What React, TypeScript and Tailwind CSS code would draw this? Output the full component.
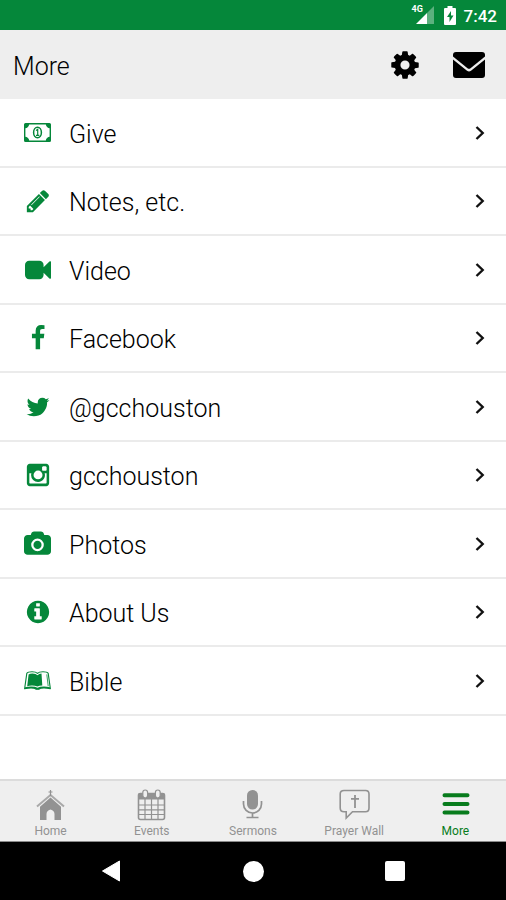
import React from "react";

const glyphs: Record<string, { width: number; path: string }> = {
  pencil: {
    width: 1792,
    path: "M491 1536l91-91-235-235-91 91v107h128v128h107zm523-928q0-22-22-22-10 0-17 7l-542 542q-7 7-7 17 0 22 22 22 10 0 17-7l542-542q7-7 7-17zm-54-192l416 416-832 832h-416v-416zm683 96q0 53-37 90l-166 166-416-416 166-165q36-38 90-38 53 0 91 38l235 234q37 39 37 91z",
  },
  video: {
    width: 1792,
    path: "M1792 352v1088q0 42-39 59-13 5-25 5-27 0-45-19l-403-403v166q0 119-84.5 203.5t-203.5 84.5h-704q-119 0-203.5-84.5t-84.5-203.5v-704q0-119 84.5-203.5t203.5-84.5h704q119 0 203.5 84.5t84.5 203.5v165l403-402q18-19 45-19 12 0 25 5 39 17 39 59z",
  },
  facebook: {
    width: 1792,
    path: "M1343 12v264h-157q-86 0-116 36t-30 108v189h293l-39 296h-254v759h-306v-759h-255v-296h255v-218q0-186 104-288.5t277-102.5q147 0 228 12z",
  },
  twitter: {
    width: 1792,
    path: "M1684 408q-67 98-162 167 1 14 1 42 0 130-38 259.5t-115.5 248.5-184.5 210.5-258 146-323 54.5q-271 0-496-145 35 4 78 4 225 0 401-138-105-2-188-64.5t-114-159.5q33 5 61 5 43 0 85-11-112-23-185.5-111.5t-73.5-205.5v-4q68 38 146 41-66-44-105-115t-39-154q0-88 44-163 121 149 294.5 238.5t371.5 99.5q-8-38-8-74 0-134 94.5-228.5t228.5-94.5q140 0 236 102 109-21 205-78-37 115-142 178 93-10 186-50z",
  },
  instagram: {
    width: 1792,
    path: "M1490 1426v-648h-135q20 63 20 131 0 126-64 232.5t-174 168.5-240 62q-197 0-337-135.5t-140-327.5q0-68 20-131h-141v648q0 26 17.5 43.5t43.5 17.5h1069q25 0 43-17.5t18-43.5zm-284-533q0-124-90.5-211.5t-218.5-87.5q-127 0-217.5 87.5t-90.5 211.5 90.5 211.5 217.5 87.5q128 0 218.5-87.5t90.5-211.5zm284-360v-165q0-28-20-48.5t-49-20.5h-174q-29 0-49 20.5t-20 48.5v165q0 29 20 49t49 20h174q29 0 49-20t20-49zm174-208v1142q0 81-58 139t-139 58h-1142q-81 0-139-58t-58-139v-1142q0-81 58-139t139-58h1142q81 0 139 58t58 139z",
  },
  camera: {
    width: 1920,
    path: "M960 672q119 0 203.5 84.5t84.5 203.5-84.5 203.5-203.5 84.5-203.5-84.5-84.5-203.5 84.5-203.5 203.5-84.5zm704-416q106 0 181 75t75 181v896q0 106-75 181t-181 75h-1408q-106 0-181-75t-75-181v-896q0-106 75-181t181-75h224l51-136q19-49 69.5-84.5t103.5-35.5h512q53 0 103.5 35.5t69.5 84.5l51 136h224zm-704 1152q185 0 316.5-131.5t131.5-316.5-131.5-316.5-316.5-131.5-316.5 131.5-131.5 316.5 131.5 316.5 316.5 131.5z",
  },
  info: {
    width: 1792,
    path: "M1152 1376v-160q0-14-9-23t-23-9h-96v-512q0-14-9-23t-23-9h-320q-14 0-23 9t-9 23v160q0 14 9 23t23 9h96v320h-96q-14 0-23 9t-9 23v160q0 14 9 23t23 9h448q14 0 23-9t9-23zm-128-896v-160q0-14-9-23t-23-9h-192q-14 0-23 9t-9 23v160q0 14 9 23t23 9h192q14 0 23-9t9-23zm640 416q0 209-103 385.5t-279.5 279.5-385.5 103-385.5-103-279.5-279.5-103-385.5 103-385.5 279.5-279.5 385.5-103 385.5 103 279.5 279.5 103 385.5z",
  },
  cog: {
    width: 1792,
    path: "M1152 896q0-106-75-181t-181-75-181 75-75 181 75 181 181 75 181-75 75-181zm512-109v222q0 12-8 23t-20 13l-185 28q-19 54-39 91 35 50 107 138 10 12 10 25t-9 23q-27 37-99 108t-94 71q-12 0-26-9l-138-108q-44 23-91 38-16 136-29 186-7 28-36 28h-222q-14 0-24.5-8.5t-11.5-21.5l-28-184q-49-16-90-37l-141 107q-10 9-25 9-14 0-25-11-126-114-165-168-7-10-7-23 0-12 8-23 15-21 51-66.5t54-70.5q-27-50-41-99l-183-27q-13-2-21-12.5t-8-23.5v-222q0-12 8-23t19-13l186-28q14-46 39-92-40-57-107-138-10-12-10-24 0-10 9-23 26-36 98.5-107.5t94.5-71.5q13 0 26 10l138 107q44-23 91-38 16-136 29-186 7-28 36-28h222q14 0 24.5 8.5t11.5 21.5l28 184q49 16 90 37l142-107q9-9 24-9 13 0 25 10 129 119 165 170 7 8 7 22 0 12-8 23-15 21-51 66.5t-54 70.5q26 50 41 98l183 28q13 2 21 12.5t8 23.5z",
  },
};

function GlyphIcon({ name, className }: { name: string; className: string }) {
  const glyph = glyphs[name];
  return (
    <svg className={className} viewBox={`0 0 ${glyph.width} 1792`} fill="currentColor" aria-hidden="true">
      <path d={glyph.path} />
    </svg>
  );
}

function MoneyIcon() {
  return (
    <svg className="h-[19px] w-[27px]" viewBox="0 0 27 19" fill="none" stroke="currentColor" aria-hidden="true">
      <rect x="0.700" y="0.700" width="25.600" height="17.600" rx="0.800" strokeWidth="1.400" />
      <path
        d="M1 1h4.200a4.200 4.200 0 0 1-4.200 4.200zM26 1h-4.200a4.200 4.200 0 0 0 4.200 4.200zM1 18h4.200a4.200 4.200 0 0 0-4.200-4.200zM26 18h-4.200a4.200 4.200 0 0 1 4.200-4.200z"
        fill="currentColor"
        stroke="none"
      />
      <ellipse cx="13.500" cy="9.500" rx="3.900" ry="5.200" strokeWidth="1.500" />
      <path d="M12 7.600 13.700 6.400v6M12 12.400h3.300" strokeWidth="1.200" />
    </svg>
  );
}

function BookIcon() {
  return (
    <svg className="h-[19px] w-[27px]" viewBox="0 0 27 19" aria-hidden="true">
      <path
        d="M2.800 2.300Q3.800.8 8 .8q4 0 5.500 1.600Q15 .8 19 .8q4.200 0 5.200 1.500L26.400 17.800q-3-.8-6.400-.8-4 0-5 1.200h-3Q11 17 7 17q-3.400 0-6.400.8z"
        fill="none"
        stroke="currentColor"
        strokeWidth="1.100"
        strokeLinejoin="round"
      />
      <path d="M4.600 3.600Q6 2.600 8.500 2.600q3.500 0 5 1.600 1.500-1.400 4-1.600l.8 11.800q-3.300 0-4.800 1.200Q11 14.400 8 14.400q-3 0-4.800.8z" fill="currentColor" />
      <path d="M22.800 3.400l1.400 11.800" fill="none" stroke="currentColor" strokeWidth="0.800" />
      <path d="M1 16.200q3-.8 6-.8 4.500 0 6.500 1.400 2-1.400 6.500-1.400 3 0 6 .8v1.600q-3-.8-6-.8-4 0-5 1.200h-3Q11 17 7 17q-3 0-6 .8z" fill="currentColor" />
    </svg>
  );
}

const menuItems = [
  { label: "Give", icon: "money" },
  { label: "Notes, etc.", icon: "pencil" },
  { label: "Video", icon: "video" },
  { label: "Facebook", icon: "facebook" },
  { label: "@gcchouston", icon: "twitter" },
  { label: "gcchouston", icon: "instagram" },
  { label: "Photos", icon: "camera" },
  { label: "About Us", icon: "info" },
  { label: "Bible", icon: "book" },
];

function MenuIcon({ name }: { name: string }) {
  if (name === "money") return <MoneyIcon />;
  if (name === "book") return <BookIcon />;
  return <GlyphIcon name={name} className="h-[26px] max-w-[27px]" />;
}

const tabs = [
  {
    label: "Home",
    icon: (
      <>
        <path d="M15.500 1v6M13.500 3h4" stroke="currentColor" strokeWidth="1.200" />
        <path d="M2 17.500 15.500 6 29 17.500" fill="none" stroke="currentColor" strokeWidth="2" opacity=".75" />
        <path d="M5 17.800 15.500 8.600 26 17.800V31h-6.500v-6q0-3.500-4-4.500-4 1-4 4.500v6H5z" fill="currentColor" />
      </>
    ),
  },
  {
    label: "Events",
    icon: (
      <>
        <path d="M4 4h23a2 2 0 0 1 2 2v4.500H2V6a2 2 0 0 1 2-2z" fill="currentColor" />
        <rect x="2.500" y="4.500" width="26" height="26" rx="2" fill="none" stroke="currentColor" strokeWidth="1.600" />
        <path d="M9 10v20M15.500 10v20M22 10v20M2.500 16h26M2.500 20.800h26M2.500 25.500h26" stroke="currentColor" strokeWidth="1.200" />
        <rect x="6.800" y="1" width="4.800" height="8" rx="2.400" fill="#efefef" stroke="currentColor" strokeWidth="1.200" />
        <rect x="19.400" y="1" width="4.800" height="8" rx="2.400" fill="#efefef" stroke="currentColor" strokeWidth="1.200" />
      </>
    ),
  },
  {
    label: "Sermons",
    icon: (
      <>
        <rect x="10" y="1" width="11" height="19.500" rx="5.500" fill="currentColor" />
        <path d="M6.500 12v3a9 9 0 0 0 18 0v-3M15.500 24v4M9.500 28.500h12" fill="none" stroke="currentColor" strokeWidth="1.700" />
      </>
    ),
  },
  {
    label: "Prayer Wall",
    icon: (
      <>
        <path
          d="M5 1.500h21.500q3.500 0 3.500 3.500v14q0 3.800-3.500 3.800H13.500L7.200 29V22.800H5q-3.800 0-3.800-3.800V5q0-3.500 3.800-3.500z"
          fill="none"
          stroke="currentColor"
          strokeWidth="1.600"
        />
        <path d="M16 6v13M12 9.800h8" stroke="currentColor" strokeWidth="1.800" />
      </>
    ),
  },
  {
    label: "More",
    icon: (
      <path d="M4.500 6.200h23M4.500 15h23M4.500 23.600h23" stroke="currentColor" strokeWidth="4" strokeLinecap="round" />
    ),
  },
];

function StatusBar() {
  return (
    <div className="flex h-[30px] shrink-0 items-center justify-end bg-[#05873a] pr-[9px] text-white">
      <div className="relative mr-[10px]">
        <span className="absolute -top-px -left-1 text-[9px] leading-[9px] font-bold">4G</span>
        <svg className="h-[18px] w-[18px]" viewBox="0 0 18 18" aria-hidden="true">
          <path d="M0 18 11 7v11z" fill="#fff" />
          <path d="M11 7 18 0v18h-7z" fill="#fff" opacity=".35" />
        </svg>
      </div>
      <svg className="mr-2 h-[19px] w-3" viewBox="0 0 12 19" aria-hidden="true">
        <path d="M3.500 0h5v2H11q1 0 1 1v15q0 1-1 1H1q-1 0-1-1V3q0-1 1-1h2.500z" fill="#fff" />
        <path d="M7 5 3 11h2.500v5L9.500 9.500H7z" fill="#05873a" />
      </svg>
      <span className="pt-0.5 text-[17px] leading-5 font-medium">7:42</span>
    </div>
  );
}

export default function App() {
  return (
    <div className="flex min-h-screen flex-col bg-white font-[Roboto,'Liberation_Sans',sans-serif] text-black">
      <StatusBar />

      <header className="flex h-[69px] shrink-0 items-center bg-[#eee] pr-[21px] pl-[13px]">
        <h1 className="flex-1 pt-1 text-[25px] leading-8 font-light">More</h1>
        <button type="button" aria-label="Settings" className="mr-8">
          <GlyphIcon name="cog" className="h-8 w-8" />
        </button>
        <button type="button" aria-label="Messages">
          <svg className="h-[26px] w-8" viewBox="0 0 32 26" fill="currentColor" aria-hidden="true">
            <path d="M3 0h26q3 0 3 3v1.500L17.500 16.200q-1.500 1-3 0L0 4.500V3q0-3 3-3z" />
            <path d="M0 7.500 14 18.800q2 1.300 4 0L32 7.500V23q0 3-3 3H3q-3 0-3-3z" />
          </svg>
        </button>
      </header>

      <main className="flex-1">
        <ul>
          {menuItems.map((item) => (
            <li key={item.label} className="border-b-2 border-[#ebebeb] odd:h-[69px] even:h-[68px]">
              <a href="#" className="flex h-full items-center pr-5 pl-6">
                <span className="flex w-[27px] justify-center text-[#05873a]">
                  <MenuIcon name={item.icon} />
                </span>
                <span className="flex-1 pt-1 pl-[18px] text-[25px] leading-8 font-light">{item.label}</span>
                <svg className="h-4 w-3" viewBox="0 0 12 16" fill="none" aria-hidden="true">
                  <path d="M2.500 2 8.700 8 2.500 14" stroke="#111" strokeWidth="2.400" />
                </svg>
              </a>
            </li>
          ))}
        </ul>
      </main>

      <nav className="grid shrink-0 grid-cols-5 border-t-2 border-b border-t-[#dcdcdc] border-b-[#8a8a8a] bg-[#efefef]">
        {tabs.map((tab) => (
          <a
            key={tab.label}
            href="#"
            className={`flex flex-col items-center pt-2 pb-0.5 ${tab.label === "More" ? "text-[#087c1d]" : "text-[#929292]"}`}
          >
            <svg className="h-8 w-[31px]" viewBox="0 0 31 32" aria-hidden="true">
              {tab.icon}
            </svg>
            <span className="pt-0.5 text-[12px] leading-4">{tab.label}</span>
          </a>
        ))}
      </nav>

      <div className="flex h-[58px] shrink-0 items-center bg-black px-10">
        <button type="button" aria-label="Back" className="flex flex-1 justify-center">
          <svg className="h-[22px] w-[18px]" viewBox="0 0 18 22" aria-hidden="true">
            <path d="M17.500 1v20L.5 11z" fill="#fff" stroke="#fff" strokeLinejoin="round" />
          </svg>
        </button>
        <button type="button" aria-label="Home screen" className="flex flex-1 justify-center">
          <span className="h-[21px] w-[21px] rounded-full bg-white" />
        </button>
        <button type="button" aria-label="Recent apps" className="flex flex-1 justify-center">
          <span className="h-5 w-5 rounded-xs bg-white" />
        </button>
      </div>
    </div>
  );
}
